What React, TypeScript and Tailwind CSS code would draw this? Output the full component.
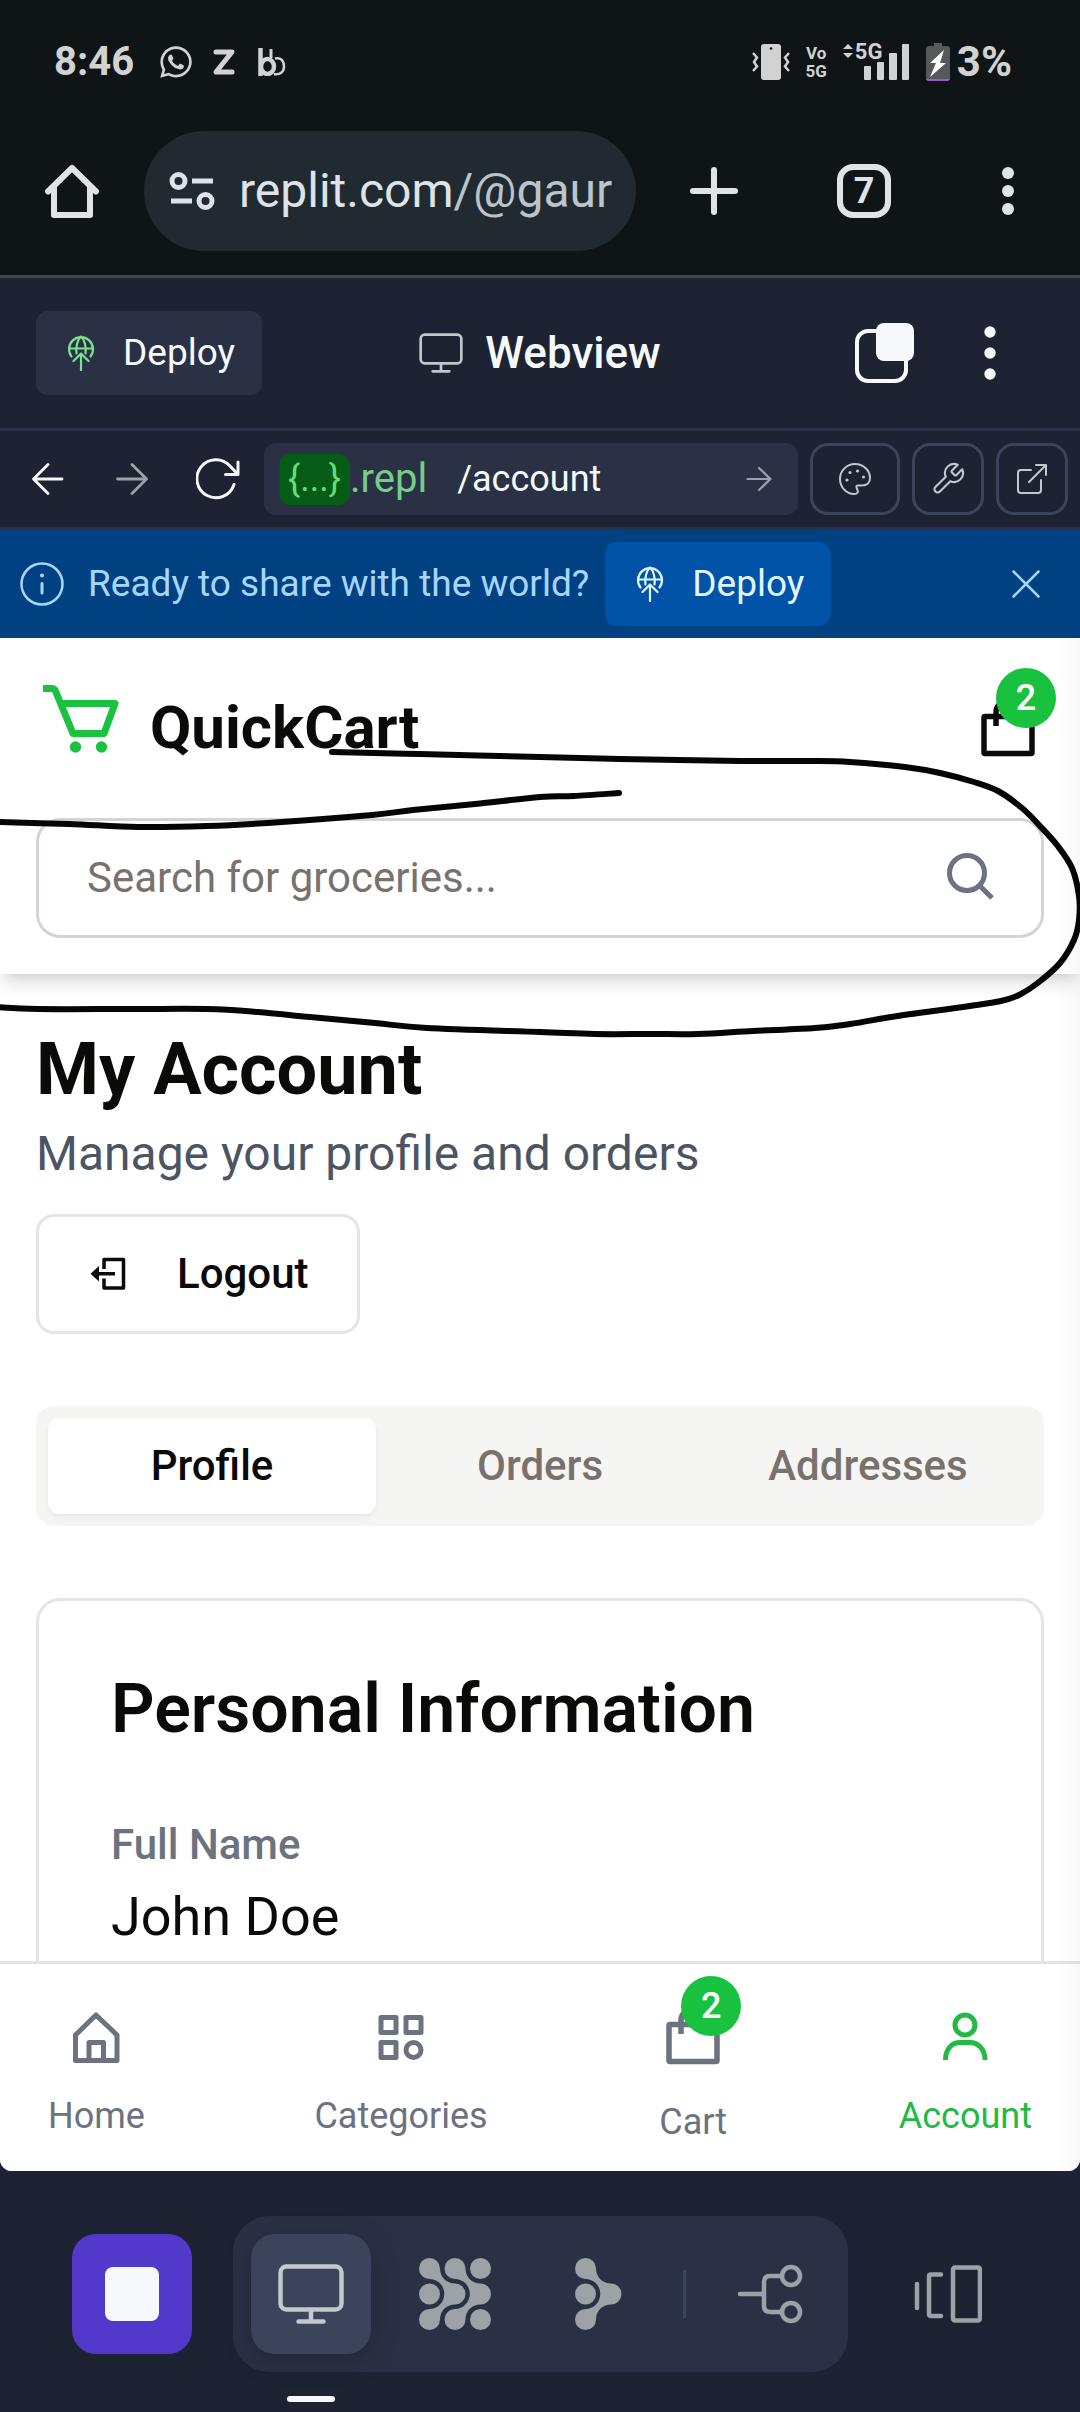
import React from "react";
import { FaWhatsapp } from "react-icons/fa";

type Pt = [number, number];

/* Turns a list of points into a smooth path (Catmull-Rom to cubic Bezier). */
function smooth(points: Pt[]): string {
  let d = `M${points[0][0]} ${points[0][1]}`;
  for (let i = 0; i < points.length - 1; i++) {
    const p0 = points[i - 1] ?? points[i];
    const p1 = points[i];
    const p2 = points[i + 1];
    const p3 = points[i + 2] ?? p2;
    d += `C${p1[0] + (p2[0] - p0[0]) / 6} ${p1[1] + (p2[1] - p0[1]) / 6} ${p2[0] - (p3[0] - p1[0]) / 6} ${p2[1] - (p3[1] - p1[1]) / 6} ${p2[0]} ${p2[1]}`;
  }
  return d;
}

/* Pen marks, relative to the top of the shop page. */
const loop: Pt[] = [
  [332, 114], [420, 116], [540, 119], [620, 121], [740, 123], [810, 123], [850, 124], [905, 129],
  [940, 135], [974, 144], [998, 153], [1022, 170], [1039, 187], [1057, 207], [1072, 230], [1079, 258],
  [1079, 282], [1074, 302], [1060, 325], [1039, 344], [1019, 357], [1001, 363], [970, 368], [926, 374],
  [891, 379], [850, 386], [815, 390], [753, 393], [698, 396], [650, 396], [595, 396], [540, 394],
  [427, 390], [375, 385], [310, 379], [258, 374], [207, 371], [131, 371], [38, 371], [-4, 369],
];
const tail: Pt[] = [
  [-4, 184], [69, 186], [138, 189], [207, 188], [282, 184], [372, 177], [413, 172], [475, 166],
  [540, 159], [574, 158], [619, 155],
];

function Scribble() {
  return (
    <svg viewBox="0 0 1080 420" className="pointer-events-none absolute inset-x-0 top-0 z-20 w-full" fill="none" stroke="#050505" strokeWidth="6" strokeLinecap="round" aria-hidden="true">
      <path d={smooth(loop)} />
      <path d={smooth(tail)} />
    </svg>
  );
}

function DeployIcon() {
  return (
    <svg viewBox="0 0 36 36" className="size-9 shrink-0" fill="none" stroke="currentColor" strokeWidth="2.2" strokeLinecap="round" strokeLinejoin="round">
      <path d="M8.5 21.5A12 12 0 1 1 27.500 21.5" />
      <path d="M6 13.500H30" />
      <path d="M13.500 18.5C12.500 12 14.500 4.500 18 1.500C21.500 4.500 23.500 12 22.500 18.500" />
      <path d="M18 35V18.500M10.500 26L18 18.500L25.500 26" />
    </svg>
  );
}

function MonitorIcon({ className, sw }: { className: string; sw: number }) {
  return (
    <svg viewBox="0 0 66 60" className={className} fill="none" stroke="currentColor" strokeWidth={sw} strokeLinecap="round">
      <rect x="2.500" y="2.500" width="61" height="43" rx="6" />
      <path d="M33 46V57M20.500 57.500H45.500" />
    </svg>
  );
}

function DotsIcon({ className }: { className: string }) {
  return (
    <svg viewBox="0 0 12 54" className={className} fill="currentColor">
      <circle cx="6" cy="6" r="5.700" />
      <circle cx="6" cy="27" r="5.700" />
      <circle cx="6" cy="48" r="5.700" />
    </svg>
  );
}

function BagIcon() {
  return (
    <svg viewBox="0 0 72 72" className="size-[72px]" fill="none" stroke="currentColor" strokeWidth="5.500" strokeLinejoin="round">
      <rect x="12" y="24.500" width="48" height="37" rx="1" />
      <path d="M24 34V20C24 6 48 6 48 20V34" />
    </svg>
  );
}

function Badge({ children }: { children: React.ReactNode }) {
  return (
    <span className="absolute -top-6 left-6 flex size-[60px] items-center justify-center rounded-full bg-[#18c23e] text-[36px] leading-[48px] font-medium text-white">
      {children}
    </span>
  );
}

const blob =
  "M10.500 0A10.500 10.500 0 0 1 21 10.500C21 19 27.500 25.500 36 25.500A10.500 10.500 0 0 1 36 46.500C27.500 46.500 21 53 21 61.500A10.500 10.500 0 1 1 10.500 51C18.700 51 25.300 44.300 25.300 36S18.700 21 10.500 21A10.500 10.500 0 1 1 10.500 0Z";

function StatusBar() {
  return (
    <div className="flex h-[124px] items-center justify-between pr-[68px] pl-[54px] text-[#d2d2d3]">
      <div className="flex items-center">
        <span className="text-[40px] leading-[48px] font-bold">8:46</span>
        <FaWhatsapp className="ml-6 size-9" />
        <svg viewBox="0 0 24 28" className="ml-[18px] h-7 w-6" fill="none" stroke="currentColor" strokeWidth="5" strokeLinejoin="round" strokeLinecap="round">
          <path d="M4 4H20L4 24H20" />
        </svg>
        <svg viewBox="0 0 28 28" className="ml-[22px] size-7" fill="none" stroke="currentColor">
          <path d="M2.500 0V28" strokeWidth="4.500" />
          <ellipse cx="9.500" cy="18.500" rx="6.500" ry="7.500" strokeWidth="4.500" />
          <path d="M13 1V10" strokeWidth="3" />
          <path d="M17 10.500C23 9 26 13 26 18.500S22 27 16 26" strokeWidth="2.500" />
        </svg>
      </div>
      <div className="flex items-center">
        <svg viewBox="0 0 38 36" className="h-9 w-[38px]" fill="none" stroke="currentColor" strokeWidth="2.500">
          <rect x="9" y="0" width="20" height="36" rx="3" fill="currentColor" stroke="none" />
          <circle cx="19" cy="4.500" r="1.300" fill="#101417" stroke="none" />
          <path d="M1 9L5 13.500L2 18L5 22.500L1 27M37 9L33 13.500L36 18L33 22.500L37 27" />
        </svg>
        <span className="ml-4 flex flex-col text-center text-[17px] leading-[18px] font-bold">
          <span>Vo</span>
          <span>5G</span>
        </span>
        <span className="relative ml-4 block h-9 w-[66px]">
          <svg viewBox="0 0 66 36" className="h-9 w-[66px]" fill="currentColor">
            <path d="M5 0L10 5H0ZM5 14L10 9H0Z" />
            <rect x="21" y="22" width="7" height="14" rx="1" />
            <rect x="34" y="18" width="7" height="18" rx="1" />
            <rect x="46" y="9" width="8" height="27" rx="1" />
            <rect x="59" y="0" width="7" height="36" rx="1" />
          </svg>
          <span className="absolute -top-1 left-3 text-[22px] leading-6 font-bold">5G</span>
        </span>
        <svg viewBox="0 0 24 38" className="ml-[17px] h-[38px] w-6">
          <path d="M8 0H16V3H21Q24 3 24 6V35Q24 38 21 38H3Q0 38 0 35V6Q0 3 3 3H8Z" fill="#56595b" />
          <path d="M0 36H24Q23 38 21 38H3Q1 38 0 36Z" fill="#9a57d6" />
          <path d="M18 7L4 20H10L4 34L20 20H14Z" fill="#fff" />
        </svg>
        <span className="ml-[7px] text-[42px] leading-[48px] font-bold">3%</span>
      </div>
    </div>
  );
}

function BrowserBar() {
  return (
    <div className="flex items-center border-b-[3px] border-[#42484e] pt-[7px] pr-[66px] pb-6 pl-[45px] text-[#dfe3e7]">
      <button type="button" aria-label="Home page">
        <svg viewBox="0 0 54 54" className="size-[54px]" fill="none" stroke="currentColor" strokeWidth="6" strokeLinecap="round" strokeLinejoin="round">
          <path d="M3 27.500L27 4L51 27.500M9 24V51H45V24" />
        </svg>
      </button>
      <div className="ml-[45px] flex h-[120px] min-w-0 flex-1 items-center overflow-hidden rounded-full bg-[#202a30] pl-[25px]">
        <svg viewBox="0 0 46 38" className="h-[38px] w-[46px] shrink-0" fill="none" stroke="currentColor" strokeWidth="5">
          <circle cx="9.500" cy="9" r="6.500" />
          <circle cx="36.500" cy="29" r="6.500" />
          <path d="M23 9H44M2 29H23" />
        </svg>
        <span className="ml-6 text-[48px] leading-[60px] whitespace-nowrap">
          replit.com<span className="text-[#bcc3cb]">/@gaur</span>
        </span>
      </div>
      <button type="button" aria-label="New tab" className="ml-[54px]">
        <svg viewBox="0 0 48 48" className="size-12" fill="none" stroke="currentColor" strokeWidth="6" strokeLinecap="round">
          <path d="M24 3V45M3 24H45" />
        </svg>
      </button>
      <button type="button" aria-label="Open tabs" className="ml-[99px] flex size-[54px] items-center justify-center rounded-2xl border-6 border-current text-[36px] leading-9 font-bold">
        7
      </button>
      <button type="button" aria-label="Browser menu" className="ml-[111px]">
        <svg viewBox="0 0 12 48" className="h-12 w-3" fill="currentColor">
          <circle cx="6" cy="6" r="6" />
          <circle cx="6" cy="24" r="6" />
          <circle cx="6" cy="42" r="6" />
        </svg>
      </button>
    </div>
  );
}

function WorkspaceHeader() {
  return (
    <div className="grid h-[153px] grid-cols-[1fr_auto_1fr] items-center border-b-[3px] border-[#2b3144] pr-[84px] pl-9 text-[#f5f9fc]">
      <div>
        <button type="button" className="flex h-[84px] items-center gap-6 rounded-xl bg-[#2b3144] px-[27px] text-[37px] leading-[48px]">
          <span className="text-[#7de090]"><DeployIcon /></span>
          Deploy
        </button>
      </div>
      <h1 className="ml-12 flex items-center gap-[22px] text-[44px] leading-[60px] font-medium">
        <MonitorIcon className="h-10 w-11 text-[#c2c8cc]" sw={4} />
        Webview
      </h1>
      <div className="flex items-center justify-end gap-[70px]">
        <button type="button" aria-label="Open panes">
          <svg viewBox="0 0 60 60" className="size-[60px]" fill="none">
            <rect x="3" y="8" width="49" height="50" rx="11" stroke="currentColor" strokeWidth="4" />
            <rect x="22" y="0" width="38" height="38" rx="8" fill="currentColor" />
          </svg>
        </button>
        <button type="button" aria-label="Webview menu">
          <DotsIcon className="h-[54px] w-3" />
        </button>
      </div>
    </div>
  );
}

const outlined =
  "flex h-[72px] shrink-0 items-center justify-center rounded-[18px] border-[3px] border-[#3c445c] text-[#c2c8cc]";

function AddressRow() {
  return (
    <div className="flex h-[99px] items-center border-b-[3px] border-[#2b3144] pr-3 pl-8 text-[#f5f9fc]">
      <button type="button" aria-label="Back" className="shrink-0">
        <svg viewBox="0 0 32 32" className="size-8" fill="none" stroke="currentColor" strokeWidth="2.800" strokeLinecap="round" strokeLinejoin="round">
          <path d="M30 16H2M16 1.500L1.500 16L16 30.500" />
        </svg>
      </button>
      <button type="button" aria-label="Forward" className="ml-[52px] shrink-0 text-[#9da2a6]">
        <svg viewBox="0 0 32 32" className="size-8" fill="none" stroke="currentColor" strokeWidth="2.800" strokeLinecap="round" strokeLinejoin="round">
          <path d="M1.500 16H30M16 1.500L30.500 16L16 30.500" />
        </svg>
      </button>
      <button type="button" aria-label="Reload" className="ml-12 shrink-0">
        <svg viewBox="0 0 44 42" className="h-[42px] w-11" fill="none" stroke="currentColor" strokeWidth="3" strokeLinecap="round" strokeLinejoin="round">
          <path d="M38 26.500A19 19 0 1 1 34 8L42 16.500M42 4V16.500H29.500" />
        </svg>
      </button>
      <div className="ml-6 flex h-[72px] min-w-0 flex-1 items-center rounded-xl bg-[#2b3144] pr-[26px] pl-[15px] text-[36px] leading-[48px]">
        <span className="flex h-[51px] w-[71px] items-center justify-center rounded-xl bg-[#055c14] text-[#62dc7a]">{"{...}"}</span>
        <span className="text-[40px] text-[#76cd8a]">.repl</span>
        <input aria-label="Path" defaultValue="/account" className="ml-[30px] w-0 min-w-0 flex-1 bg-transparent outline-none" />
        <button type="button" aria-label="Go" className="text-[#9da2a6]">
          <svg viewBox="0 0 26 26" className="size-[26px]" fill="none" stroke="currentColor" strokeWidth="2.200" strokeLinecap="round" strokeLinejoin="round">
            <path d="M1.500 13H24M13 2L24.500 13L13 24" />
          </svg>
        </button>
      </div>
      <button type="button" aria-label="Theme" className={outlined + " ml-3 w-[90px]"}>
        <svg viewBox="0 0 32 32" className="size-8" fill="none" stroke="currentColor" strokeWidth="2">
          <path d="M16 1C7.700 1 1 7.700 1 16S7.500 31 15 31C18.500 31 19.500 29 18.500 27C17.500 25 16.500 22.500 19 22.500H23C28 22.500 31 19.500 31 15C31 7 24 1 16 1Z" strokeLinejoin="round" />
          <g fill="currentColor" stroke="none">
            <circle cx="11" cy="9.500" r="1.600" />
            <circle cx="18.500" cy="8" r="1.600" />
            <circle cx="24.500" cy="14" r="1.600" />
            <circle cx="8" cy="17" r="1.600" />
          </g>
        </svg>
      </button>
      <button type="button" aria-label="Developer tools" className={outlined + " ml-3 w-[72px]"}>
        <svg viewBox="0 0 24 24" className="size-9" fill="none" stroke="currentColor" strokeWidth="1.400" strokeLinecap="round" strokeLinejoin="round">
          <path d="M14.700 6.300a1 1 0 0 0 0 1.400l1.600 1.600a1 1 0 0 0 1.400 0l3.770-3.770a6 6 0 0 1-7.940 7.940l-6.910 6.910a2.120 2.120 0 0 1-3-3l6.910-6.910a6 6 0 0 1 7.940-7.940l-3.760 3.760z" />
        </svg>
      </button>
      <button type="button" aria-label="Open in a new tab" className={outlined + " ml-3 w-[72px]"}>
        <svg viewBox="0 0 30 30" className="size-[30px]" fill="none" stroke="currentColor" strokeWidth="2" strokeLinecap="round" strokeLinejoin="round">
          <path d="M14 6H4Q1 6 1 9V26Q1 29 4 29H21Q24 29 24 26V16M19 1H29V11M29 1L12 18" />
        </svg>
      </button>
    </div>
  );
}

function Banner() {
  return (
    <div className="flex h-[108px] items-center bg-[#004182] pr-10 pl-5 text-[#a8d5ff]">
      <svg viewBox="0 0 44 44" className="size-11 shrink-0" fill="none" stroke="currentColor" strokeWidth="2.500" strokeLinecap="round">
        <circle cx="22" cy="22" r="20.500" />
        <path d="M22 21.500V31" strokeWidth="3" />
        <circle cx="22" cy="13.500" r="2" fill="currentColor" stroke="none" />
      </svg>
      <p className="ml-6 text-[37px] leading-[48px] whitespace-nowrap">Ready to share with the world?</p>
      <button type="button" className="ml-4 flex h-[84px] items-center gap-6 rounded-xl bg-[#0053a6] px-[27px] text-[37px] leading-[48px] text-[#e0f5ff]">
        <DeployIcon />
        Deploy
      </button>
      <button type="button" aria-label="Dismiss" className="ml-auto">
        <svg viewBox="0 0 28 28" className="size-7" fill="none" stroke="currentColor" strokeWidth="2.500" strokeLinecap="round">
          <path d="M1.500 1.500L26.500 26.500M26.500 1.500L1.500 26.500" />
        </svg>
      </button>
    </div>
  );
}

function ShopHeader() {
  return (
    <header className="relative z-10 bg-white p-9 shadow-[0_12px_18px_-3px_rgba(0,0,0,0.12),0_6px_12px_-6px_rgba(0,0,0,0.12)]">
      <div className="flex h-[108px] items-center justify-between">
        <a href="#home" className="flex items-center gap-6">
          <svg viewBox="0 0 90 90" className="size-[90px] text-[#1ac23f]" fill="none" stroke="currentColor" strokeWidth="7" strokeLinejoin="round">
            <path d="M7 5.500H16Q18.500 5.500 19.500 8L37 50.500H68L79 20.500H26" />
            <g fill="currentColor" stroke="none">
              <circle cx="39.500" cy="64" r="5.700" />
              <circle cx="65.500" cy="64" r="5.700" />
            </g>
          </svg>
          <span className="text-[60px] leading-[84px] font-bold">QuickCart</span>
        </a>
        <a href="#cart" aria-label="Cart, 2 items" className="relative">
          <BagIcon />
          <Badge>2</Badge>
        </a>
      </div>
      <form role="search" className="mt-9 flex h-[120px] items-center rounded-3xl border-[3px] border-[#d1d5db] pr-[41px] pl-12" onSubmit={(e) => e.preventDefault()}>
        <input type="text" aria-label="Search for groceries" placeholder="Search for groceries..." className="min-w-0 flex-1 bg-transparent text-[42px] leading-[60px] outline-none placeholder:text-[#78716c]" />
        <button type="submit" aria-label="Search" className="text-[#6b7280]">
          <svg viewBox="0 0 60 60" className="size-[60px]" fill="none" stroke="currentColor" strokeWidth="5">
            <circle cx="27" cy="25" r="17.500" />
            <path d="M39.500 37.500L52 50" />
          </svg>
        </button>
      </form>
    </header>
  );
}

const tabs = ["Profile", "Orders", "Addresses"];

function Account() {
  return (
    <main className="flex flex-1 flex-col px-9 pt-12">
      <h2 className="text-[72px] leading-[96px] font-bold">My Account</h2>
      <p className="text-[48px] leading-[72px] text-[#4b5563]">Manage your profile and orders</p>
      <div className="mt-6">
        <button type="button" className="flex h-[120px] items-center gap-12 rounded-[18px] border-[3px] border-[#e5e5e5] px-12 text-[42px] leading-[60px] font-medium">
          <svg viewBox="0 0 42 42" className="size-[42px]" fill="none" stroke="currentColor" strokeWidth="3.500" strokeLinejoin="round">
            <path d="M17 16V6.500H36.500V35H17V25.500M10 20.700H28" />
            <path d="M3.500 20.700L12 13V28.500Z" fill="currentColor" stroke="none" />
          </svg>
          Logout
        </button>
      </div>
      <div role="tablist" className="mt-[72px] grid h-[120px] grid-cols-3 rounded-[18px] bg-[#f5f5f4] p-3 text-[42px] leading-[60px] font-medium">
        {tabs.map((t, i) => (
          <button
            key={t}
            type="button"
            role="tab"
            aria-selected={i === 0}
            className={i === 0 ? "rounded-xl bg-white shadow-[0_3px_6px_rgba(0,0,0,0.05)]" : "text-[#78716c]"}
          >
            {t}
          </button>
        ))}
      </div>
      <section className="mt-[72px] flex-1 rounded-t-3xl border-[3px] border-b-0 border-[#e5e5e5] px-[72px] pt-[72px]">
        <h3 className="text-[68px] leading-[72px] font-semibold whitespace-nowrap">Personal Information</h3>
        <dl className="mt-[70px]">
          <dt className="text-[42px] leading-[60px] font-medium text-[#6b7280]">Full Name</dt>
          <dd className="text-[54px] leading-[84px]">John Doe</dd>
        </dl>
      </section>
    </main>
  );
}

function BottomNav() {
  const item = "flex flex-col items-center";
  return (
    <nav className="flex items-start justify-between border-t-[3px] border-[#e5e5e5] bg-white px-12 pt-9 pb-[25px] text-[36px] leading-[48px] text-[#6b7280]">
      <a href="#home" className={item}>
        <svg viewBox="0 0 72 72" className="size-[72px]" fill="none" stroke="currentColor" strokeWidth="5" strokeLinejoin="round">
          <path d="M36 15L57 35V60.500H15.500V35ZM29 60V42.500H43.500V60" />
        </svg>
        <span className="mt-5">Home</span>
      </a>
      <a href="#categories" className={item}>
        <svg viewBox="0 0 72 72" className="size-[72px]" fill="none" stroke="currentColor" strokeWidth="5" strokeLinejoin="round">
          <rect x="16" y="17.500" width="15" height="15" />
          <rect x="41" y="17.500" width="15" height="15" />
          <rect x="16" y="42.500" width="15" height="15" />
          <circle cx="48.500" cy="50" r="7.500" />
        </svg>
        <span className="mt-5">Categories</span>
      </a>
      <a href="#cart" className={item}>
        <span className="relative">
          <BagIcon />
          <Badge>2</Badge>
        </span>
        <span className="mt-[26px]">Cart</span>
      </a>
      <a href="#account" aria-current="page" className={item + " text-[#22b945]"}>
        <svg viewBox="0 0 72 72" className="size-[72px]" fill="none" stroke="currentColor" strokeWidth="5">
          <circle cx="36" cy="25" r="10" />
          <path d="M16.500 60C16.500 49 23 42.500 31 42.500H41C49 42.500 56 49 56 60" />
        </svg>
        <span className="mt-5">Account</span>
      </a>
    </nav>
  );
}

function Dock() {
  const cell = "flex size-[120px] items-center justify-center";
  return (
    <div className="flex items-center justify-between px-[72px] pt-[45px] pb-10 text-[#9da2a6]">
      <button type="button" aria-label="Stop" className={cell + " rounded-3xl bg-[#5239cb]"}>
        <span className="size-[54px] rounded-lg bg-[#f5f9fc]" />
      </button>
      <div className="flex items-center gap-6 rounded-[36px] bg-[#2b3144] p-[18px]">
        <button type="button" aria-label="Webview" className={cell + " relative rounded-3xl bg-[#3c445c] text-[#c2c8cc] shadow-[0_6px_24px_rgba(20,25,40,0.4)]"}>
          <MonitorIcon className="h-[60px] w-[66px]" sw={4.5} />
          <span className="absolute top-[162px] h-1.5 w-12 rounded-full bg-[#f5f9fc]" />
        </button>
        <button type="button" aria-label="Agent" className={cell}>
          <svg viewBox="0 0 72 72" className="size-[72px]" fill="currentColor">
            <path d={blob} />
            <path d={blob} transform="translate(25.500 0)" />
            <circle cx="10.500" cy="36" r="10.500" />
            <circle cx="61.500" cy="10.500" r="10.500" />
            <circle cx="61.500" cy="61.500" r="10.500" />
          </svg>
        </button>
        <button type="button" aria-label="Assistant" className={cell}>
          <svg viewBox="0 0 47 72" className="h-[72px] w-[47px]" fill="currentColor">
            <path d={blob} />
            <circle cx="10.500" cy="36" r="10.500" />
          </svg>
        </button>
        <span className="h-12 w-[3px] bg-[#3c445c]" />
        <button type="button" aria-label="Workflows" className={cell}>
          <svg viewBox="0 0 66 60" className="h-[60px] w-[66px]" fill="none" stroke="currentColor" strokeWidth="4.500" strokeLinecap="round">
            <circle cx="54" cy="12" r="9" />
            <circle cx="54" cy="48" r="9" />
            <path d="M3 30H26M44 12H33Q27 12 27 18V42Q27 48 33 48H44" />
          </svg>
        </button>
      </div>
      <button type="button" aria-label="All tabs" className={cell}>
        <svg viewBox="0 0 68 60" className="h-[60px] w-[68px]" fill="none" stroke="currentColor" strokeWidth="4.500" strokeLinecap="round" strokeLinejoin="round">
          <path d="M3 20V44M27 10.500H17Q15 10.500 15 12.500V50Q15 52 17 52H27" />
          <rect x="39" y="3.500" width="27" height="53" rx="2" />
        </svg>
      </button>
    </div>
  );
}

export default function App() {
  return (
    <div className="flex min-h-screen flex-col overflow-x-hidden bg-[#1d2333] font-['Roboto',sans-serif]">
      <div className="bg-[#0f1417]">
        <StatusBar />
        <BrowserBar />
      </div>
      <WorkspaceHeader />
      <AddressRow />
      <Banner />
      <div className="relative flex flex-1 flex-col overflow-hidden rounded-b-xl bg-white text-[#0c0a09]">
        <ShopHeader />
        <Account />
        <BottomNav />
        <div className="pointer-events-none absolute inset-y-0 right-0 z-10 w-6 bg-linear-to-l from-black/3 to-transparent" />
        <Scribble />
      </div>
      <Dock />
    </div>
  );
}
